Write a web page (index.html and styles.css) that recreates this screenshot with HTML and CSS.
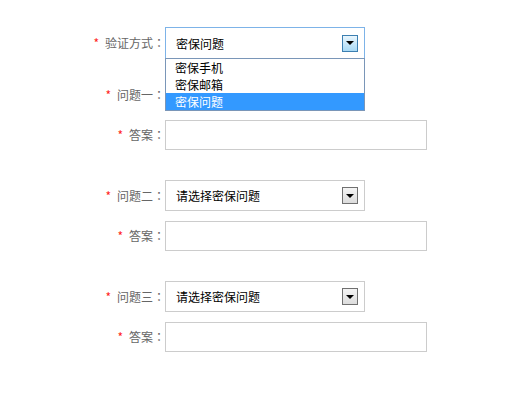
FILE: index.html
```html
<!DOCTYPE html>
<html lang="zh-CN">
<head>
    <meta charset="UTF-8">
    <title>设置密保问题</title>
    <link rel="stylesheet" href="styles.css">
</head>
<body>
    <div class="form">
        <div class="row row-method">
            <label class="label"><span class="req">*</span>验证方式：</label>
            <div class="select focus">
                <span class="value">密保问题</span>
                <span class="arrow"></span>
                <ul class="options">
                    <li>密保手机</li>
                    <li>密保邮箱</li>
                    <li class="active">密保问题</li>
                </ul>
            </div>
        </div>

        <div class="group">
            <div class="row">
                <label class="label"><span class="req">*</span>问题一：</label>
                <div class="select">
                    <span class="value">请选择密保问题</span>
                    <span class="arrow"></span>
                </div>
            </div>
            <div class="row">
                <label class="label"><span class="req">*</span>答案：</label>
                <input type="text" class="answer">
            </div>
        </div>

        <div class="group">
            <div class="row">
                <label class="label"><span class="req">*</span>问题二：</label>
                <div class="select">
                    <span class="value">请选择密保问题</span>
                    <span class="arrow"></span>
                </div>
            </div>
            <div class="row">
                <label class="label"><span class="req">*</span>答案：</label>
                <input type="text" class="answer">
            </div>
        </div>

        <div class="group">
            <div class="row">
                <label class="label"><span class="req">*</span>问题三：</label>
                <div class="select">
                    <span class="value">请选择密保问题</span>
                    <span class="arrow"></span>
                </div>
            </div>
            <div class="row">
                <label class="label"><span class="req">*</span>答案：</label>
                <input type="text" class="answer">
            </div>
        </div>
    </div>
</body>
</html>
```

FILE: styles.css
```css
body {
    margin: 0;
    background-color: #fff;
    font-family: "Noto Sans CJK SC", "Liberation Sans", sans-serif;
    font-size: 12px;
    color: #333;
}

.form {
    padding-top: 27px;
}

.row {
    display: flex;
    align-items: center;
}

.row-method {
    position: relative;
    z-index: 10;
    margin-bottom: 20px;
}

.group {
    margin-bottom: 30px;
}

.group .row + .row {
    margin-top: 10px;
}

.label {
    width: 165px;
    flex: none;
    text-align: right;
    color: #666;
    line-height: 16px;
    font-family: "Noto Sans CJK JP", "Noto Sans CJK SC", sans-serif;
    font-feature-settings: "locl" 0;
}

.req {
    color: #f22;
    margin-right: 6px;
}

.select {
    position: relative;
    box-sizing: border-box;
    width: 200px;
    height: 31px;
    border: 1px solid #ccc;
    display: flex;
    align-items: center;
    padding: 0 6px 0 10px;
    color: #000;
    background: #fff;
}

.select.focus {
    height: 32px;
    border-color: #7db3e8;
}

.value {
    flex: 1;
}

.arrow {
    box-sizing: border-box;
    width: 16px;
    height: 17px;
    border: 1px solid #707070;
    background: linear-gradient(#f4f4f4, #dcdcdc);
    display: flex;
    align-items: center;
    justify-content: center;
}

.arrow::after {
    content: "";
    border-left: 4px solid transparent;
    border-right: 4px solid transparent;
    border-top: 4px solid #000;
}

.focus .arrow {
    border-color: #3c7fb1;
    background: linear-gradient(#eaf6fd, #a7d9f5);
}

.options {
    position: absolute;
    top: 100%;
    left: -1px;
    width: 200px;
    box-sizing: border-box;
    margin: 0;
    padding: 0;
    list-style: none;
    border: 1px solid #7a96b8;
    background: #fff;
}

.options li {
    height: 17px;
    line-height: 17px;
    padding-left: 9px;
    color: #000;
}

.options li.active {
    background-color: #3399ff;
    color: #fff;
}

.answer {
    box-sizing: border-box;
    width: 262px;
    height: 30px;
    margin: 0;
    border: 1px solid #ccc;
    padding: 0 8px;
    font: inherit;
}
```
